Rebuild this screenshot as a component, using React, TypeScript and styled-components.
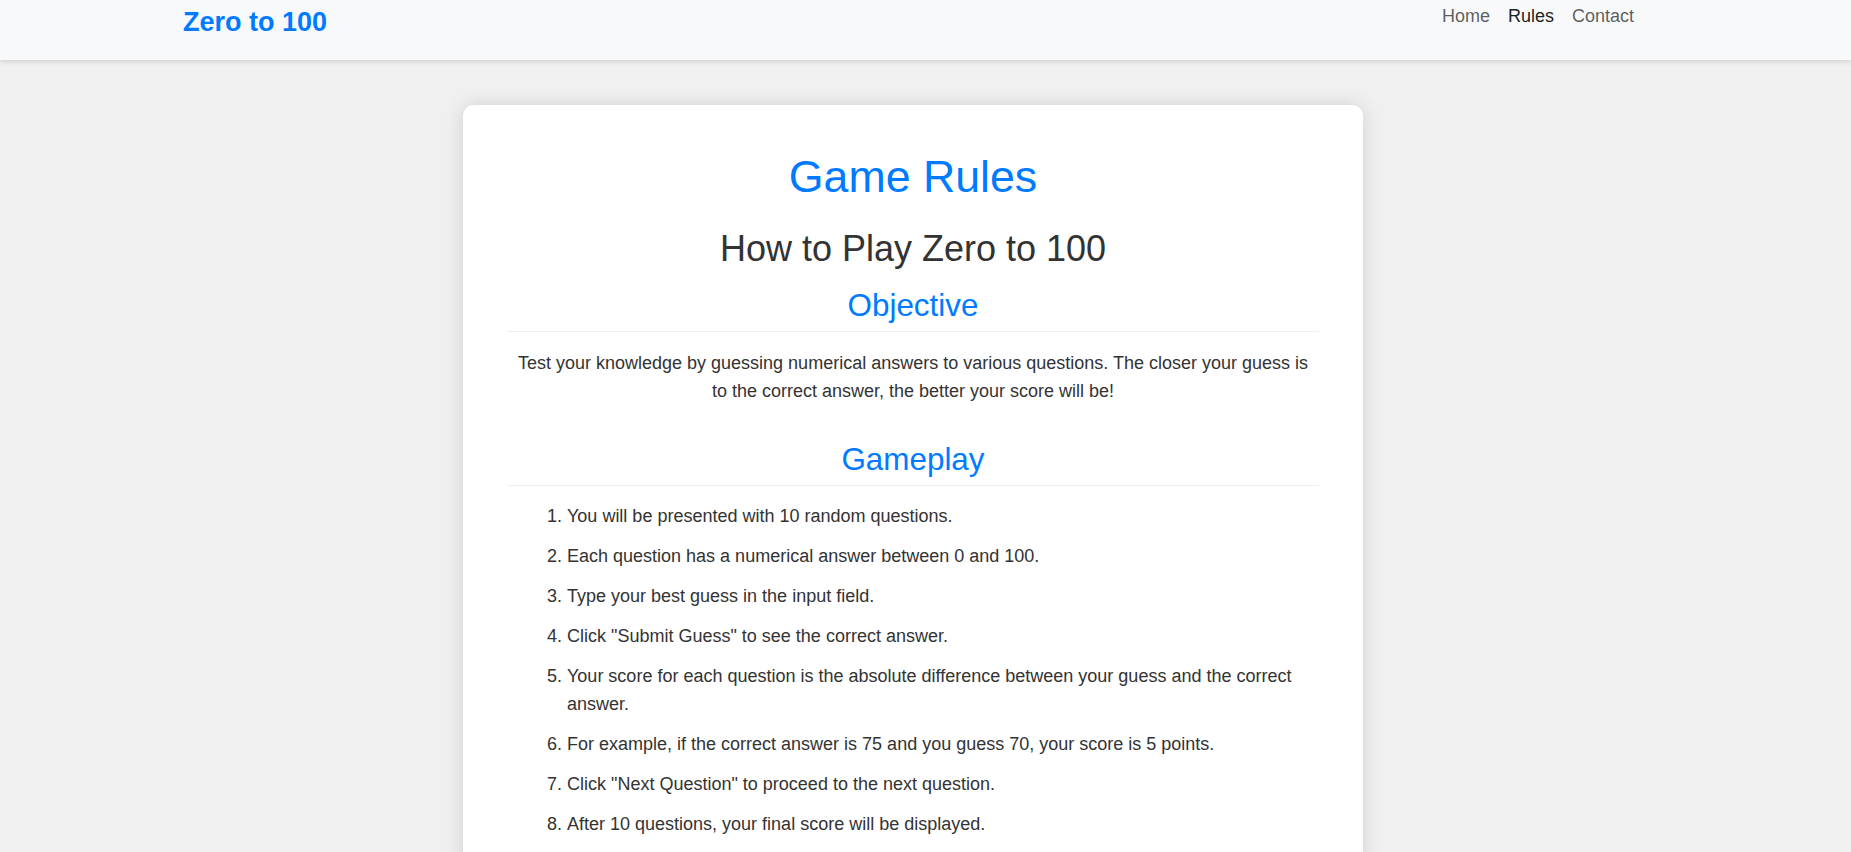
import React from "react";
import styled, { createGlobalStyle } from "styled-components";

const GlobalStyle = createGlobalStyle`
  html, body {
    margin: 0;
    padding: 0;
    background: #f0f0f0;
    font-family: "Liberation Sans", Arial, sans-serif;
    color: #333;
    font-size: 18px;
    line-height: 28.16px;
  }
  * { box-sizing: border-box; }
`;

const NavBar = styled.header`
  height: 60px;
  background: #f8f9fa;
  box-shadow: 0 2px 5px rgba(0, 0, 0, 0.12);
  padding-right: 25px;
`;

const NavInner = styled.div`
  max-width: 1460px;
  margin: 0 auto;
  display: flex;
  justify-content: space-between;
  align-items: flex-start;
`;

const Brand = styled.a`
  display: block;
  padding-top: 6px;
  font-size: 27px;
  line-height: 1.2;
  font-weight: 700;
  color: #007bff;
  text-decoration: none;
`;

const NavList = styled.ul`
  display: flex;
  list-style: none;
  margin: 0;
  padding: 2px 0 0;
`;

const NavLink = styled.a<{ $active?: boolean }>`
  display: block;
  padding: 0 9px;
  font-size: 18px;
  line-height: 28.16px;
  color: ${(p) => (p.$active ? "rgba(0,0,0,0.9)" : "rgba(0,0,0,0.65)")};
  text-decoration: none;
`;

const Main = styled.main`
  padding: 45px 25px 40px 0;
`;

const Card = styled.section`
  max-width: 900px;
  margin: 0 auto;
  background: #fff;
  border-radius: 11px;
  box-shadow: 0 0 20px rgba(0, 0, 0, 0.13);
  padding: 46px 44px 44px;
`;

const Title = styled.h1`
  margin: 0 0 24px;
  text-align: center;
  font-size: 44.7px;
  line-height: 52.8px;
  font-weight: 400;
  color: #007bff;
`;

const Subtitle = styled.h2`
  margin: 0 0 18px;
  text-align: center;
  font-size: 36px;
  line-height: 42.24px;
  font-weight: 400;
  color: #333;
`;

const SectionTitle = styled.h3<{ $spaced?: boolean }>`
  margin: ${(p) => (p.$spaced ? "37px" : "0")} 0 16.6px;
  padding-bottom: 6px;
  border-bottom: 1px solid #eee;
  text-align: center;
  font-size: 31.4px;
  line-height: 36.96px;
  font-weight: 400;
  color: #007bff;
`;

const Paragraph = styled.p`
  margin: 0;
  padding: 0 6px;
  text-align: center;
`;

const Steps = styled.ol`
  margin: 0;
  padding-left: 60px;
`;

const Step = styled.li`
  margin-bottom: 11.8px;
`;

const steps = [
  "You will be presented with 10 random questions.",
  "Each question has a numerical answer between 0 and 100.",
  "Type your best guess in the input field.",
  'Click "Submit Guess" to see the correct answer.',
  "Your score for each question is the absolute difference between your guess and the correct answer.",
  "For example, if the correct answer is 75 and you guess 70, your score is 5 points.",
  'Click "Next Question" to proceed to the next question.',
  "After 10 questions, your final score will be displayed.",
];

export default function App() {
  return (
    <>
      <GlobalStyle />
      <NavBar>
        <NavInner>
          <Brand href="#">Zero to 100</Brand>
          <NavList>
            <li><NavLink href="#">Home</NavLink></li>
            <li><NavLink href="#" $active>Rules</NavLink></li>
            <li><NavLink href="#">Contact</NavLink></li>
          </NavList>
        </NavInner>
      </NavBar>
      <Main>
        <Card>
          <Title>Game Rules</Title>
          <Subtitle>How to Play Zero to 100</Subtitle>
          <SectionTitle>Objective</SectionTitle>
          <Paragraph>
            Test your knowledge by guessing numerical answers to various questions. The closer your guess is
            to the correct answer, the better your score will be!
          </Paragraph>
          <SectionTitle $spaced>Gameplay</SectionTitle>
          <Steps>
            {steps.map((s) => (
              <Step key={s}>{s}</Step>
            ))}
          </Steps>
        </Card>
      </Main>
    </>
  );
}
